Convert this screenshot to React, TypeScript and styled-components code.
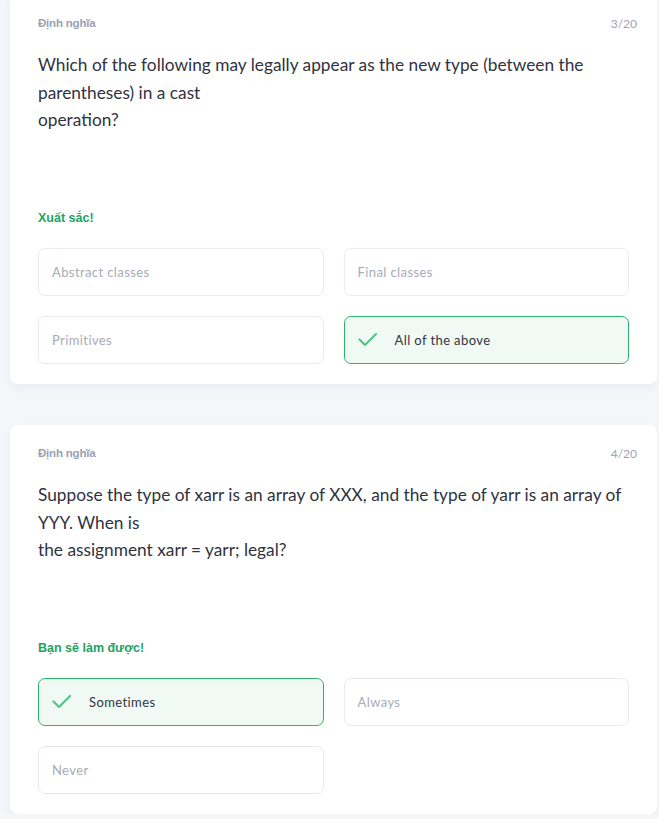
import React from "react";
import styled, { createGlobalStyle, css } from "styled-components";

const GlobalStyle = createGlobalStyle`
  html, body {
    margin: 0;
    padding: 0;
    background: #f5f6fa;
    font-family: Lato, "Open Sans", "Liberation Sans", sans-serif;
  }
`;

const Page = styled.div`
  display: flex;
  flex-direction: column;
  gap: 41px;
  padding: 0 2px 0 10px;
  margin-top: -5px;
`;

const Card = styled.section`
  background: #ffffff;
  border-radius: 8px;
  box-shadow: 0 4px 10px rgba(40, 50, 90, 0.05);
  padding: 20px 28px 20px 28px;
  display: flex;
  flex-direction: column;
`;

const Header = styled.div`
  display: flex;
  justify-content: space-between;
  align-items: center;
  height: 16px;
  margin-right: -8px;
`;

const Tag = styled.span`
  font-family: "Liberation Sans", Arial, sans-serif;
  font-size: 11.5px;
  font-weight: 700;
  color: #9a9fb5;
  letter-spacing: -0.2px;
`;

const Counter = styled.span`
  font-size: 12px;
  color: #9ea3b8;
`;

const Question = styled.p`
  margin: 20px 0 0 0;
  min-height: 137px;
  font-size: 17.3px;
  line-height: 27.5px;
  color: #30333f;
  white-space: pre-line;
`;

const Status = styled.div`
  margin-top: 20px;
  height: 20px;
  line-height: 20px;
  font-family: "Liberation Sans", Arial, sans-serif;
  font-size: 12.5px;
  font-weight: 700;
  color: #1fa25f;
`;

const Options = styled.div`
  margin-top: 20px;
  display: grid;
  grid-template-columns: 1fr 1fr;
  gap: 20px;
`;

const Option = styled.div<{ $selected?: boolean }>`
  box-sizing: border-box;
  height: 48px;
  border: 1px solid #e9eaf1;
  border-radius: 7px;
  background: #ffffff;
  display: flex;
  align-items: center;
  padding-left: 13px;
  font-size: 13px;
  letter-spacing: 0.4px;
  color: #a9abb5;
  ${(p) =>
    p.$selected &&
    css`
      border-color: #2fb36c;
      background: #f0f9f4;
      color: #33363f;
    `}
`;

const CheckWrap = styled.span`
  display: inline-flex;
  width: 20px;
  margin-right: 17px;
`;

const Check = () => (
  <CheckWrap>
    <svg width="20" height="16" viewBox="0 0 20 16" fill="none">
      <path
        d="M1.5 7.5 L7 13 L18 2"
        stroke="#52c48c"
        strokeWidth="2.2"
        strokeLinecap="round"
        strokeLinejoin="round"
      />
    </svg>
  </CheckWrap>
);

type Q = {
  counter: string;
  text: string;
  status: string;
  options: string[];
  correct: number;
};

const questions: Q[] = [
  {
    counter: "3/20",
    text:
      "Which of the following may legally appear as the new type (between the\nparentheses) in a cast\noperation?",
    status: "Xuất sắc!",
    options: ["Abstract classes", "Final classes", "Primitives", "All of the above"],
    correct: 3,
  },
  {
    counter: "4/20",
    text:
      "Suppose the type of xarr is an array of XXX, and the type of yarr is an array of\nYYY. When is\nthe assignment xarr = yarr; legal?",
    status: "Bạn sẽ làm được!",
    options: ["Sometimes", "Always", "Never"],
    correct: 0,
  },
];

export default function App() {
  return (
    <>
      <GlobalStyle />
      <Page>
        {questions.map((q) => (
          <Card key={q.counter}>
            <Header>
              <Tag>Định nghĩa</Tag>
              <Counter>{q.counter}</Counter>
            </Header>
            <Question>{q.text}</Question>
            <Status>{q.status}</Status>
            <Options>
              {q.options.map((o, i) => (
                <Option key={o} $selected={i === q.correct}>
                  {i === q.correct && <Check />}
                  {o}
                </Option>
              ))}
            </Options>
          </Card>
        ))}
      </Page>
    </>
  );
}
